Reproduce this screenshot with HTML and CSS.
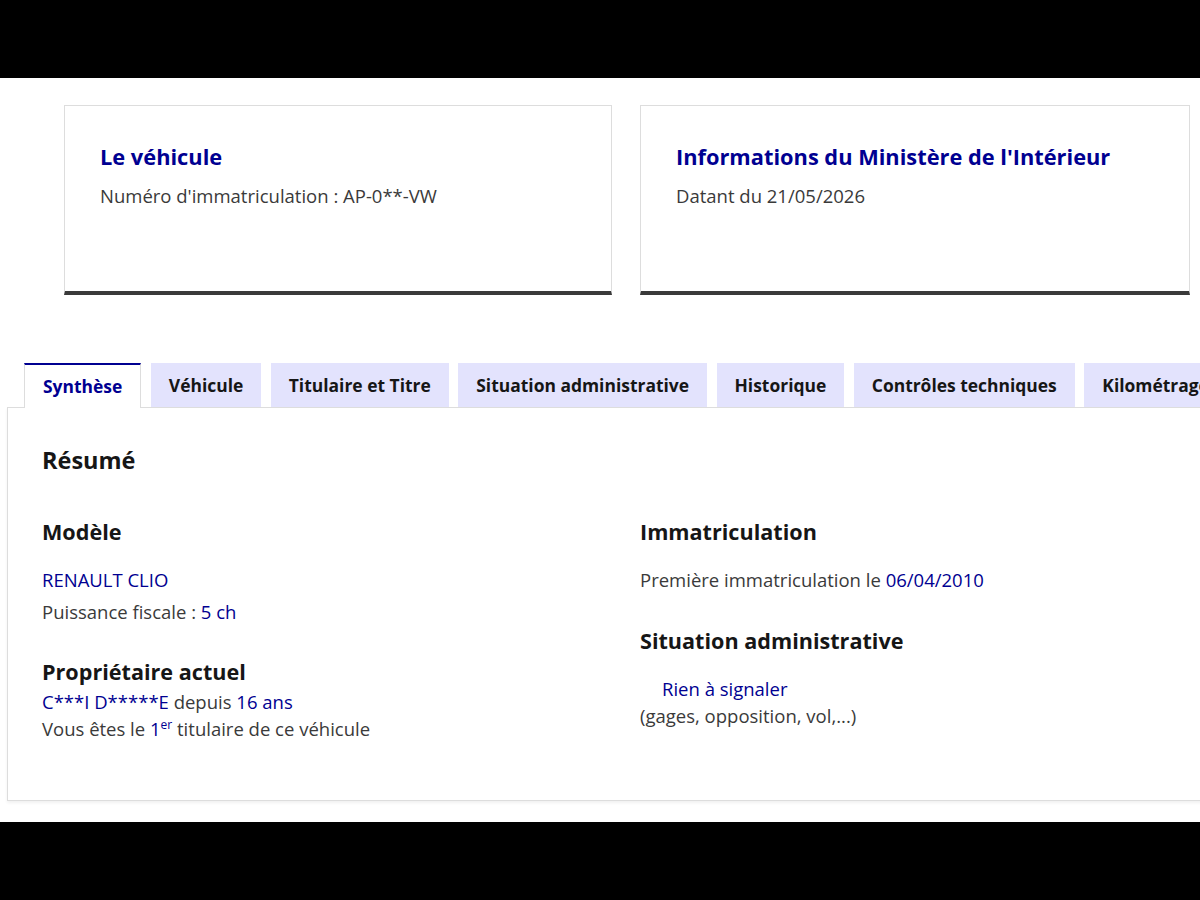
FILE: index.html
```html
<!DOCTYPE html>
<html lang="fr">
<head>
    <meta charset="UTF-8">
    <meta name="viewport" content="width=device-width, initial-scale=1.0">
    <title>Historique du véhicule</title>
    <link rel="stylesheet" href="styles.css">
</head>
<body>
    <div class="screen">
        <div class="cards">
            <div class="card">
                <h2 class="card-title">Le véhicule</h2>
                <p class="card-text">Numéro d'immatriculation : AP-0**-VW</p>
            </div>
            <div class="card">
                <h2 class="card-title">Informations du Ministère de l'Intérieur</h2>
                <p class="card-text">Datant du 21/05/2026</p>
            </div>
        </div>

        <div class="tabs">
            <ul class="tab-list">
                <li class="tab active">Synthèse</li>
                <li class="tab">Véhicule</li>
                <li class="tab">Titulaire et Titre</li>
                <li class="tab">Situation administrative</li>
                <li class="tab">Historique</li>
                <li class="tab">Contrôles techniques</li>
                <li class="tab">Kilométrage</li>
            </ul>
            <div class="panel">
                <h3 class="panel-title">Résumé</h3>
                <div class="summary">
                    <div class="col">
                        <h4 class="block-title">Modèle</h4>
                        <p class="line first blue">RENAULT CLIO</p>
                        <p class="line">Puissance fiscale : <span class="blue">5 ch</span></p>
                        <h4 class="block-title spaced">Propriétaire actuel</h4>
                        <p class="line tight"><span class="blue">C***I D*****E</span> depuis <span class="blue">16 ans</span></p>
                        <p class="line tight">Vous êtes le <span class="blue">1<sup>er</sup></span> titulaire de ce véhicule</p>
                    </div>
                    <div class="col">
                        <h4 class="block-title">Immatriculation</h4>
                        <p class="line first">Première immatriculation le <span class="blue">06/04/2010</span></p>
                        <h4 class="block-title spaced-sm">Situation administrative</h4>
                        <p class="line tight status blue">Rien à signaler</p>
                        <p class="line tight">(gages, opposition, vol,...)</p>
                    </div>
                </div>
            </div>
        </div>
    </div>
</body>
</html>
```

FILE: styles.css
```css
body {
    margin: 0;
    background: #000;
    font-family: "Open Sans", "Liberation Sans", sans-serif;
    color: #3a3a3a;
}
.screen {
    margin-top: 78px;
    height: 744px;
    background: #fff;
    overflow: hidden;
}
.cards {
    display: grid;
    grid-template-columns: 548px 550px;
    gap: 28px;
    padding: 27px 0 0 64px;
}
.card {
    box-sizing: border-box;
    height: 190px;
    border: 1px solid #dddddd;
    border-bottom: 4px solid #3a3a3a;
    padding: 37px 35px;
}
.card-title {
    margin: 0;
    font-size: 21.8px;
    line-height: 28px;
    font-weight: 700;
    color: #000091;
}
.card-text {
    margin: 13px 0 0;
    font-size: 18.5px;
    line-height: 24px;
}
.tabs {
    margin: 68px 0 0 7px;
    width: 1240px;
}
.tab-list {
    display: flex;
    align-items: flex-end;
    gap: 9.5px;
    margin: 0;
    padding: 0 0 0 17px;
    list-style: none;
}
.tab {
    flex-shrink: 0;
    box-sizing: border-box;
    height: 44px;
    padding: 0 18px;
    display: flex;
    align-items: center;
    background: #e3e3fd;
    font-size: 17.45px;
    font-weight: 700;
    color: #161616;
}
.tab.active {
    height: 45px;
    margin-bottom: -1px;
    padding-bottom: 1px;
    background: #fff;
    border-top: 2px solid #000091;
    border-left: 1px solid #dddddd;
    border-right: 1px solid #dddddd;
    color: #000091;
}
.panel {
    border: 1px solid #dddddd;
    height: 394px;
    box-sizing: border-box;
    padding: 36px 34px 0;
    box-shadow: 0 2px 3px rgba(0, 0, 0, 0.06);
}
.panel-title {
    margin: 0;
    font-size: 23.5px;
    line-height: 32px;
    font-weight: 700;
    color: #161616;
}
.summary {
    display: grid;
    grid-template-columns: 598px 1fr;
    margin-top: 42px;
}
.block-title {
    margin: 0;
    font-size: 21.6px;
    line-height: 28px;
    font-weight: 700;
    color: #161616;
}
.block-title.spaced {
    margin-top: 34px;
}
.block-title.spaced-sm {
    margin-top: 35px;
}
.line {
    margin: 8px 0 0;
    font-size: 18.5px;
    line-height: 24px;
}
.line.first {
    margin-top: 22px;
}
.line.tight {
    margin-top: 0;
    line-height: 27px;
}
.block-title + .line.tight {
    margin-top: 2px;
}
.spaced-sm + .line.tight {
    margin-top: 20px;
}
.status {
    padding-left: 22px;
}
.blue {
    color: #000091;
}
sup {
    font-size: 12px;
    line-height: 0;
}
```
